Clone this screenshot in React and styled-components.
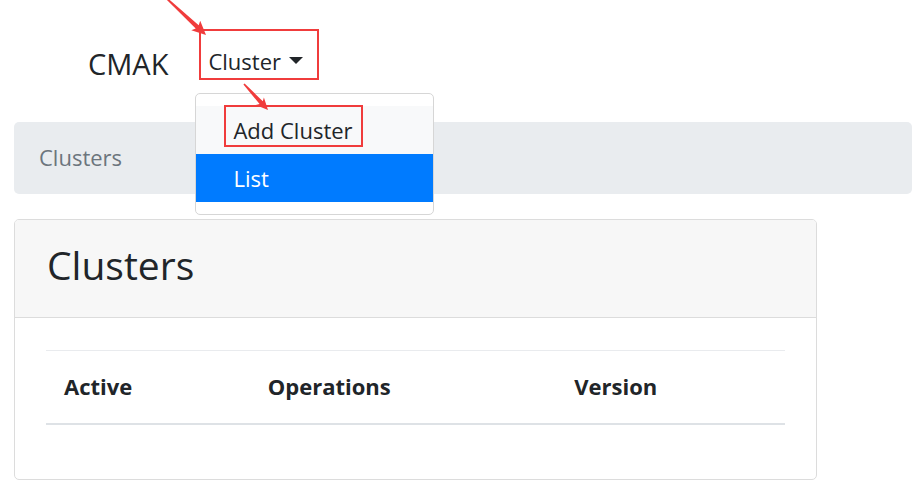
import React from 'react'
import styled, { createGlobalStyle } from 'styled-components';

const RED = '#f03c3c';

const GlobalStyle = createGlobalStyle`
  html, body {
    margin: 0;
    padding: 0;
    background: #fff;
  }
  body {
    font-family: "Open Sans", "Noto Sans", "Liberation Sans", sans-serif;
    color: #212529;
    font-size: 22px;
    line-height: 33px;
  }
  * { box-sizing: border-box; }
`

const Page = styled.div`
  position: relative;
  width: 920px;
  height: 501px;
  overflow: hidden;
  padding: 0 8px 0 14px;
`

const Navbar = styled.nav`
  display: flex;
  align-items: flex-start;
  height: 122px;
  padding: 29px 0 0 74px;
`

const Brand = styled.a`
  font-size: 29px;
  line-height: 42px;
  margin: 14px 31px 0 0;
  color: #212529;
`

const DropdownWrap = styled.div`
  position: relative;
`

const Toggle = styled.a`
  display: flex;
  align-items: center;
  border: 2px solid ${RED};
  padding: 14px 14px 0 7px;
  color: #212529;
  cursor: pointer;

  &::after {
    content: "";
    display: inline-block;
    margin-left: 8px;
    border-top: 7px solid #212529;
    border-left: 7px solid transparent;
    border-right: 7px solid transparent;
    margin-bottom: 2px;
  }
`

const Menu = styled.div`
  position: absolute;
  left: -4px;
  top: calc(100% + 13px);
  width: 239px;
  padding: 12px 0;
  background: #fff;
  border: 1px solid #d6d6d6;
  border-radius: 5px;
  z-index: 10;
`

const MenuItem = styled.a`
  display: block;
  padding: 8px 37px 7px;
  background: ${p => (p.$active ? '#007bff' : p.$hover ? '#f8f9fa' : 'transparent')};
  color: ${p => (p.$active ? '#fff' : '#212529')};
  white-space: nowrap;
`

const Marked = styled.span`
  border: 2px solid ${RED};
  padding: 8px 8px 0 7px;
  margin: 0 -10px 0 -9px;
`

const Breadcrumb = styled.ol`
  list-style: none;
  margin: 0 0 25px;
  padding: 19px 25px 20px;
  background: #e9ecef;
  border-radius: 5px;
  color: #6c757d;
`

const Card = styled.section`
  width: 803px;
  border: 1px solid #dcdcdc;
  border-radius: 5px;
  overflow: hidden;
`

const CardHeader = styled.header`
  background: #f7f7f7;
  border-bottom: 1px solid #dcdcdc;
  padding: 21px 32px 29px;

  h2 {
    margin: 0;
    font-size: 39px;
    line-height: 47px;
    font-weight: 500;
  }
`

const CardBody = styled.div`
  padding: 32px 31px 31px;
`

const Table = styled.table`
  width: 100%;
  border-collapse: collapse;
  margin-bottom: 23px;

  th {
    text-align: left;
    font-weight: 700;
    padding: 19px 18px 20px;
    border-top: 1px solid #e9ebee;
    border-bottom: 2px solid #dee2e6;
  }
`

const Col = styled.col`
  width: ${p => p.$w}px;
`

const Overlay = styled.svg`
  position: absolute;
  left: 0;
  top: 0;
  pointer-events: none;
  z-index: 20;
`

// tapered arrow polygon from start to tip
const arrowPoints = ([sx, sy], [tx, ty], head = 13, half = 6, w0 = 0.8, w1 = 2.2) => {
  const dx = tx - sx, dy = ty - sy;
  const len = Math.hypot(dx, dy);
  const ux = dx / len, uy = dy / len;
  const nx = -uy, ny = ux;
  const bx = tx - ux * head, by = ty - uy * head;
  const pts = [
    [sx + nx * w0, sy + ny * w0],
    [bx + nx * w1 + ux * 2, by + ny * w1 + uy * 2],
    [bx + nx * half, by + ny * half],
    [tx, ty],
    [bx - nx * half, by - ny * half],
    [bx - nx * w1 + ux * 2, by - ny * w1 + uy * 2],
    [sx - nx * w0, sy - ny * w0],
  ];
  return pts.map(p => p.map(v => v.toFixed(1)).join(',')).join(' ');
};

const Arrows = () => (
  <Overlay width="920" height="501" viewBox="0 0 920 501">
    <polygon points={arrowPoints([164, -4], [206, 35], 14, 6.5)} fill={RED} />
    <polygon points={arrowPoints([244, 84], [268, 110], 12, 5.5)} fill={RED} />
  </Overlay>
)

export default function App() {
  return (
    <Page>
      <GlobalStyle />
      <Navbar>
        <Brand>CMAK</Brand>
        <DropdownWrap>
          <Toggle>Cluster</Toggle>
          <Menu>
            <MenuItem $hover><Marked>Add Cluster</Marked></MenuItem>
            <MenuItem $active>List</MenuItem>
          </Menu>
        </DropdownWrap>
      </Navbar>
      <Breadcrumb>
        <li>Clusters</li>
      </Breadcrumb>
      <Card>
        <CardHeader>
          <h2>Clusters</h2>
        </CardHeader>
        <CardBody>
          <Table>
            <colgroup>
              <Col $w={204} />
              <Col $w={307} />
              <Col $w={229} />
            </colgroup>
            <thead>
              <tr>
                <th>Active</th>
                <th>Operations</th>
                <th>Version</th>
              </tr>
            </thead>
            <tbody></tbody>
          </Table>
        </CardBody>
      </Card>
      <Arrows />
    </Page>
  )
}
